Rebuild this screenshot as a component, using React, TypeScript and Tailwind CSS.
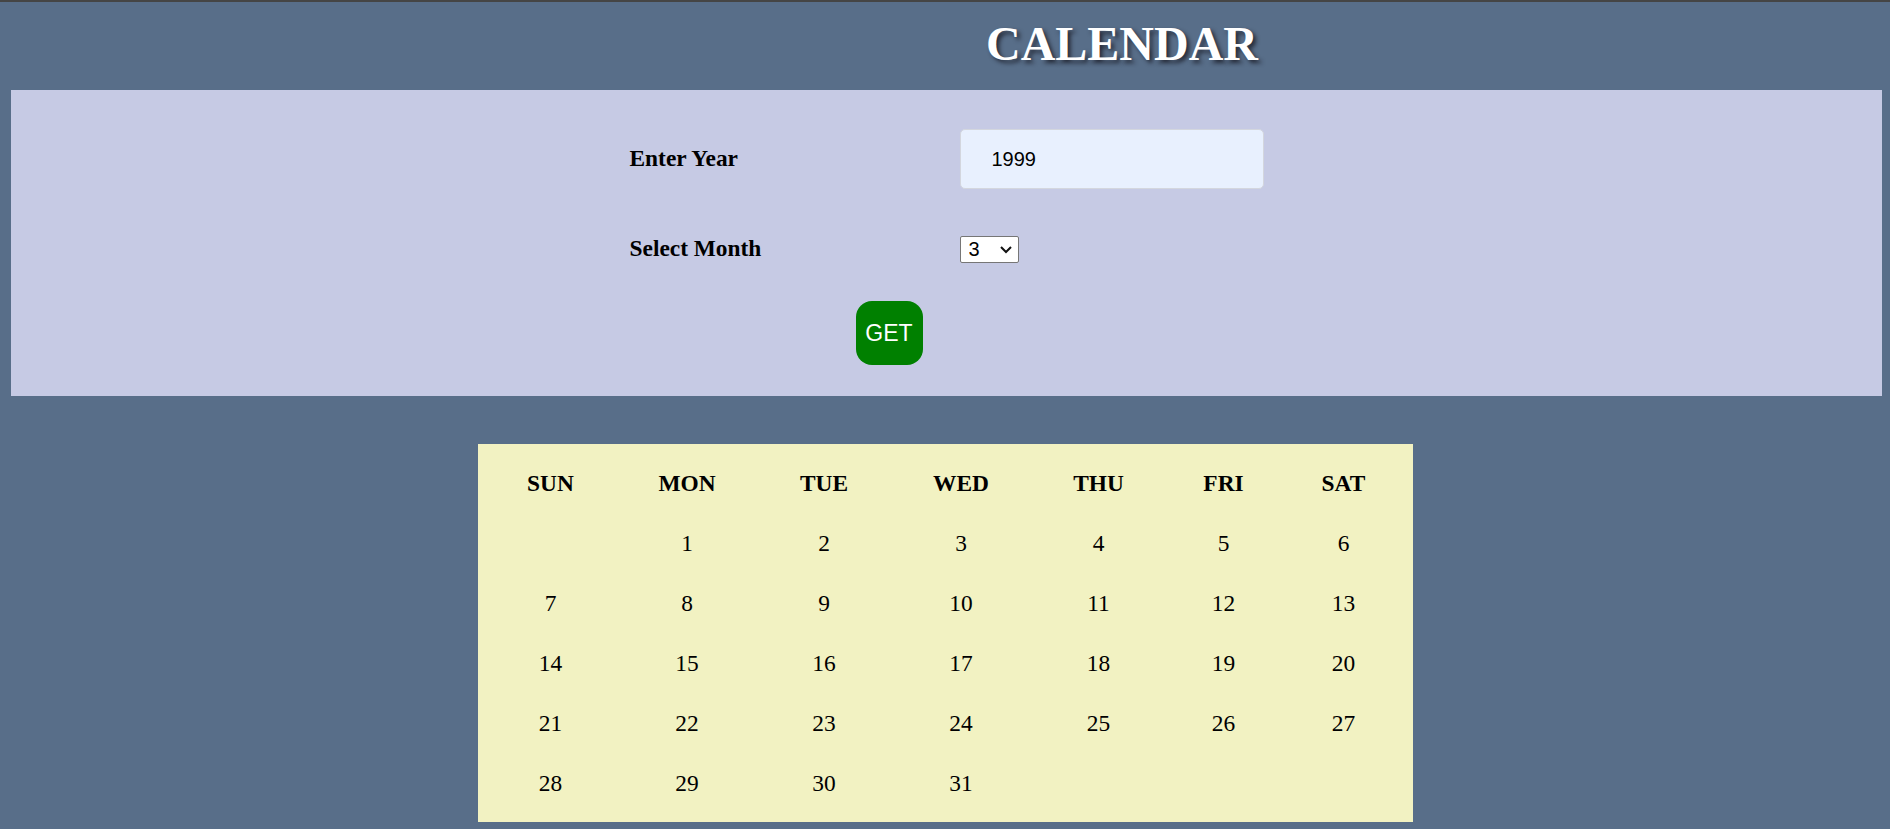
import React, { useState } from 'react';

const DAYS = ['SUN', 'MON', 'TUE', 'WED', 'THU', 'FRI', 'SAT'];

const buildCells = (year: number, month: number) => {
  const first = new Date(year, month - 1, 1).getDay();
  const total = new Date(year, month, 0).getDate();
  const cells: (number | null)[] = [];
  for (let i = 0; i < first; i++) cells.push(null);
  for (let d = 1; d <= total; d++) cells.push(d);
  while (cells.length % 7 !== 0) cells.push(null);
  return cells;
};

export default function App() {
  const [year, setYear] = useState('1999');
  const [month, setMonth] = useState('3');
  const [shown, setShown] = useState({ year: 1999, month: 3 });

  const cells = buildCells(shown.year, shown.month);

  const handleGet = () => {
    const y = parseInt(year, 10);
    if (!isNaN(y)) setShown({ year: y, month: parseInt(month, 10) });
  };

  return (
    <div className="min-h-[829px] bg-[#586e89] border-t-2 border-[#454545] font-['Liberation_Serif',serif] text-black">
      <div className="h-[88px] pt-[18px] pl-[986px]">
        <h1 className="text-[48px] leading-[48px] font-bold text-white [text-shadow:3px_3px_4px_rgba(20,20,30,0.75)]">
          CALENDAR
        </h1>
      </div>

      <div className="ml-[11px] mr-[8px] h-[306px] bg-[#c6cae4] pt-[39px]">
        <div className="mx-auto w-[634px]">
          <div className="grid grid-cols-[330px_304px] items-center h-[60px]">
            <h3 className="text-[23.4px] font-bold">Enter Year</h3>
            <input
              value={year}
              onChange={(e) => setYear(e.target.value)}
              className="h-[60px] w-[304px] rounded-[5px] border border-[#d3d6de] bg-[#e8f0fe] pl-[31px] font-['Liberation_Sans',Arial,sans-serif] text-[20px] text-black outline-none"
            />
          </div>

          <div className="grid grid-cols-[330px_304px] items-center h-[60px] mt-[30px]">
            <h3 className="text-[23.4px] font-bold">Select Month</h3>
            <div className="relative w-[59px] h-[27px]">
              <select
                value={month}
                onChange={(e) => setMonth(e.target.value)}
                className="w-[59px] h-[27px] appearance-none rounded-[2px] border border-[#767676] bg-white pl-[8px] font-['Liberation_Sans',Arial,sans-serif] text-[20px] leading-[25px] text-black"
              >
                {Array.from({ length: 12 }, (_, i) => (
                  <option key={i + 1} value={String(i + 1)}>
                    {i + 1}
                  </option>
                ))}
              </select>
              <svg
                className="pointer-events-none absolute left-[40px] top-[10px]"
                width="12"
                height="8"
                viewBox="0 0 12 8"
              >
                <polyline points="1,1 6,6 11,1" fill="none" stroke="#111" strokeWidth="2" />
              </svg>
            </div>
          </div>

          <button
            onClick={handleGet}
            className="mt-[22px] ml-[226px] w-[67px] h-[64px] rounded-[16px] bg-[#008000] font-['Liberation_Sans',Arial,sans-serif] text-[23px] text-white"
          >
            GET
          </button>
        </div>
      </div>

      <div className="mx-auto mt-[48px] w-[935px] bg-[#f2f2c2] pt-[9px] pb-[9px] pl-[5px] pr-[5px]">
        <div className="grid grid-cols-[136px_137px_137px_137px_138px_112px_128px]">
          {DAYS.map((d) => (
            <div key={d} className="h-[60px] leading-[60px] text-center text-[23.4px] font-bold">
              {d}
            </div>
          ))}
          {cells.map((c, i) => (
            <div key={i} className="h-[60px] leading-[60px] text-center text-[23.4px]">
              {c ?? ''}
            </div>
          ))}
        </div>
      </div>
    </div>
  );
}
